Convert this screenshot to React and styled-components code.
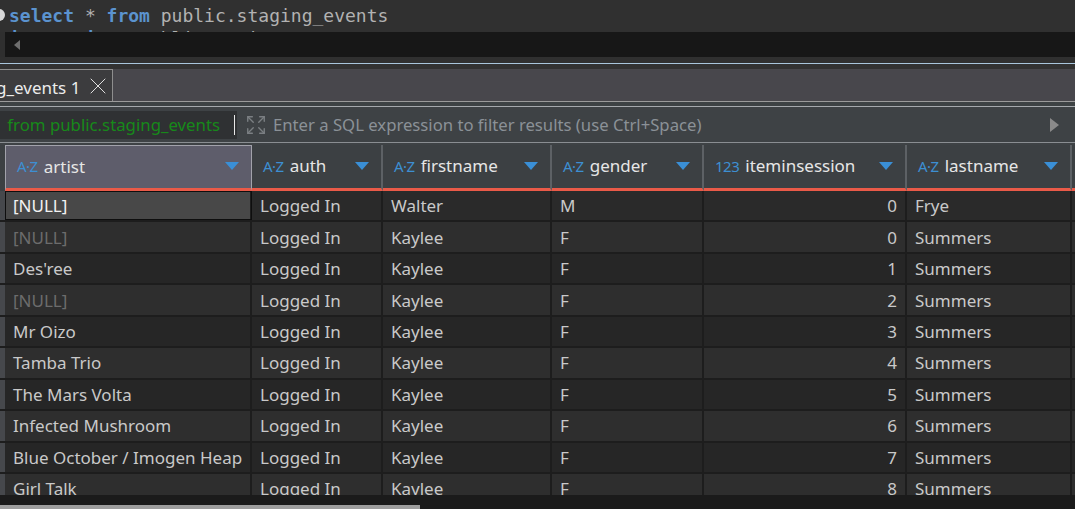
import React from "react"
import styled, { createGlobalStyle } from "styled-components"
import { X, Expand } from "lucide-react"

const GlobalStyle = createGlobalStyle`
	html, body {
		margin: 0;
		padding: 0;
		background: #2b2b2b;
		overflow: hidden;
	}
	body {
		font-family: "Noto Sans", "Open Sans", sans-serif;
	}
`

const columns = [
	{ name: "artist", type: "text", width: 247 },
	{ name: "auth", type: "text", width: 131 },
	{ name: "firstname", type: "text", width: 169 },
	{ name: "gender", type: "text", width: 152 },
	{ name: "iteminsession", type: "num", width: 203 },
	{ name: "lastname", type: "text", width: 165 },
]

const rows = [
	[null, "Logged In", "Walter", "M", 0, "Frye"],
	[null, "Logged In", "Kaylee", "F", 0, "Summers"],
	["Des'ree", "Logged In", "Kaylee", "F", 1, "Summers"],
	[null, "Logged In", "Kaylee", "F", 2, "Summers"],
	["Mr Oizo", "Logged In", "Kaylee", "F", 3, "Summers"],
	["Tamba Trio", "Logged In", "Kaylee", "F", 4, "Summers"],
	["The Mars Volta", "Logged In", "Kaylee", "F", 5, "Summers"],
	["Infected Mushroom", "Logged In", "Kaylee", "F", 6, "Summers"],
	["Blue October / Imogen Heap", "Logged In", "Kaylee", "F", 7, "Summers"],
	["Girl Talk", "Logged In", "Kaylee", "F", 8, "Summers"],
]

export default function App() {
	return (
		<Page>
			<GlobalStyle />
			<Editor>
				<CodeLine>
					<Marker />
					<Kw>select</Kw> <Plain>*</Plain> <Kw>from</Kw> <Plain>public.staging_events</Plain>
				</CodeLine>
				<CodeLine>
					<Kw>insert</Kw> <Kw>into</Kw> <Plain>public.artists</Plain>
				</CodeLine>
			</Editor>
			<HScroll>
				<LeftArrow />
			</HScroll>
			<Splitter />
			<TabBar>
				<Tab>
					<TabTitle>g_events 1</TabTitle>
					<CloseIcon size={28} strokeWidth={0.85} />
				</Tab>
			</TabBar>
			<FilterBar>
				<FilterInput>
					<FilterText>from public.staging_events</FilterText>
					<Caret />
				</FilterInput>
				<ExpandIcon size={22} strokeWidth={1.5} />
				<Placeholder>Enter a SQL expression to filter results (use Ctrl+Space)</Placeholder>
				<PlayTriangle />
			</FilterBar>
			<Grid>
				<HeaderRow>
					<Gutter />
					{columns.map((c, i) => (
						<HeaderCell key={c.name} $w={c.width} $active={i === 0}>
							<TypeIcon>{c.type === "num" ? "123" : "A·Z"}</TypeIcon>
							<HeaderName>{c.name}</HeaderName>
							<DropDown />
						</HeaderCell>
					))}
					<HeaderCell $w={20} />
				</HeaderRow>
				<Body>
					{rows.map((r, ri) => (
						<Row key={ri} $odd={ri % 2 === 1}>
							<Gutter $body />
							{r.map((v, ci) => (
								<Cell
									key={ci}
									$w={columns[ci].width}
									$num={columns[ci].type === "num"}
									$null={v === null && !(ri === 0 && ci === 0)}
									$selected={ri === 0 && ci === 0}
								>
									{v === null ? "[NULL]" : v}
								</Cell>
							))}
							<Cell $w={20} />
						</Row>
					))}
				</Body>
			</Grid>
			<BottomScroll>
				<Thumb />
			</BottomScroll>
		</Page>
	)
}

const Page = styled.div`
	display: flex;
	flex-direction: column;
	width: 1075px;
	height: 509px;
	overflow: hidden;
	background: #2f2f2f;
`

const Editor = styled.div`
	height: 32px;
	flex-shrink: 0;
	overflow: hidden;
	background: #303030;
	padding: 4px 0 0 9px;
	box-sizing: border-box;
	font-family: "DejaVu Sans Mono", "Liberation Mono", monospace;
	font-size: 18px;
	line-height: 23px;
`

const CodeLine = styled.div`
	position: relative;
	white-space: pre;
`

const Marker = styled.span`
	position: absolute;
	left: -16px;
	top: 5px;
	width: 12px;
	height: 12px;
	border-radius: 50%;
	background: #d8d8d8;
`

const Kw = styled.span`
	color: #5b93cf;
	font-weight: bold;
`

const Plain = styled.span`
	color: #b2b2b2;
`

const HScroll = styled.div`
	height: 25px;
	flex-shrink: 0;
	margin-left: 5px;
	background: #171717;
	display: flex;
	align-items: center;
	padding-left: 9px;
`

const LeftArrow = styled.div`
	width: 0;
	height: 0;
	border-top: 5px solid transparent;
	border-bottom: 5px solid transparent;
	border-right: 6px solid #6e6e6e;
`

const Splitter = styled.div`
	height: 12px;
	flex-shrink: 0;
	box-sizing: border-box;
	background: #323232;
	border-top: 6px solid #303030;
	position: relative;
	&::after {
		content: "";
		position: absolute;
		left: 0;
		right: 0;
		top: 0;
		height: 1px;
		background: #a9c6dd;
	}
`

const TabBar = styled.div`
	height: 33px;
	flex-shrink: 0;
	box-sizing: border-box;
	background: #48474c;
	display: flex;
	border-bottom: 1px solid #9b9b9b;
`

const Tab = styled.div`
	width: 113px;
	box-sizing: border-box;
	display: flex;
	align-items: center;
	gap: 4px;
	background: #3c3c3e;
	border-top: 1px solid #8e8e8e;
	border-right: 1px solid #8e8e8e;
	padding-top: 3px;
	overflow: hidden;
`

const TabTitle = styled.span`
	margin-left: -4px;
	color: #ececec;
	font-size: 17px;
	white-space: nowrap;
`

const CloseIcon = styled(X)`
	flex-shrink: 0;
	color: #e2e2e2;
	margin-top: -3px;
`

const FilterBar = styled.div`
	height: 41px;
	flex-shrink: 0;
	box-sizing: border-box;
	background: #3e4245;
	border-top: 5px solid #3d4244;
	display: flex;
	align-items: center;
	gap: 8px;
	padding-right: 16px;
	position: relative;
	&::before {
		content: "";
		position: absolute;
		left: 0;
		right: 0;
		top: -1px;
		height: 1px;
		background: #a5a9ad;
	}
	border-bottom: 1px solid #8a8e92;
`

const FilterInput = styled.div`
	width: 237px;
	height: 28px;
	flex-shrink: 0;
	background: #2f3133;
	display: flex;
	align-items: center;
	justify-content: flex-end;
	padding-right: 2px;
	box-sizing: border-box;
	overflow: hidden;
`

const FilterText = styled.span`
	color: #17891a;
	font-size: 16.8px;
	white-space: nowrap;
	margin-right: 14px;
`

const Caret = styled.div`
	width: 1px;
	height: 20px;
	flex-shrink: 0;
	background: #e8e8e8;
`

const ExpandIcon = styled(Expand)`
	flex-shrink: 0;
	color: #7b7f83;
`

const Placeholder = styled.span`
	flex: 1;
	color: #8b9197;
	font-size: 16.7px;
	white-space: nowrap;
	margin-left: -2px;
`

const PlayTriangle = styled.div`
	width: 0;
	height: 0;
	border-top: 7px solid transparent;
	border-bottom: 7px solid transparent;
	border-left: 9px solid #8a8a8a;
`

const Grid = styled.div`
	flex: 1;
	display: flex;
	flex-direction: column;
	overflow: hidden;
	padding-top: 2px;
	background: #3e4245;
`

const HeaderRow = styled.div`
	display: flex;
	height: 46px;
	flex-shrink: 0;
	background: #3c4043;
`

const Gutter = styled.div`
	width: 5px;
	flex-shrink: 0;
	background: ${(p) => (p.$body ? "#46484c" : "#3c4043")};
`

const HeaderCell = styled.div`
	width: ${(p) => p.$w}px;
	flex-shrink: 0;
	box-sizing: border-box;
	display: flex;
	align-items: center;
	padding: 0 12px 2px 11px;
	background: ${(p) => (p.$active ? "#5e5d6b" : "transparent")};
	border-top: ${(p) => (p.$active ? "1px solid #a2a2ab" : "none")};
	border-left: ${(p) => (p.$active ? "1px solid #a2a2ab" : "none")};
	border-right: ${(p) => (p.$active ? "1px solid #a2a2ab" : "2px solid #5d6165")};
	border-bottom: 3px solid #ea5a48;
`

const TypeIcon = styled.span`
	color: #3d8fd2;
	font-size: 15px;
	margin-right: 6px;
	letter-spacing: -0.5px;
`

const HeaderName = styled.span`
	flex: 1;
	color: #e6e6e6;
	font-size: 17px;
	white-space: nowrap;
`

const DropDown = styled.div`
	width: 0;
	height: 0;
	border-left: 7px solid transparent;
	border-right: 7px solid transparent;
	border-top: 8px solid #3a8fd6;
`

const Body = styled.div`
	flex: 1;
	overflow: hidden;
	background: #1d1d1d;
`

const Row = styled.div`
	display: flex;
	height: 31.45px;
	box-sizing: border-box;
	border-bottom: 2px solid #1d1d1d;
	background: ${(p) => (p.$odd ? "#2e2e2e" : "#262626")};
	&:first-child {
		background: #2a2a2a;
	}
`

const Cell = styled.div`
	width: ${(p) => p.$w}px;
	flex-shrink: 0;
	box-sizing: border-box;
	display: flex;
	align-items: center;
	justify-content: ${(p) => (p.$num ? "flex-end" : "flex-start")};
	padding: 0 8px;
	border-right: 2px solid #1d1d1d;
	font-size: 17px;
	white-space: nowrap;
	overflow: hidden;
	color: ${(p) => (p.$selected ? "#f2f2f2" : p.$null ? "#6c6c6c" : "#c9c9c9")};
	background: ${(p) => (p.$selected ? "#484848" : "transparent")};
	outline: ${(p) => (p.$selected ? "1px solid #0e0e0e" : "none")};
	outline-offset: -1px;
`

const BottomScroll = styled.div`
	height: 14px;
	flex-shrink: 0;
	background: #1b1b1b;
	display: flex;
	align-items: flex-end;
`

const Thumb = styled.div`
	width: 420px;
	height: 4px;
	background: #9e9e9e;
`
